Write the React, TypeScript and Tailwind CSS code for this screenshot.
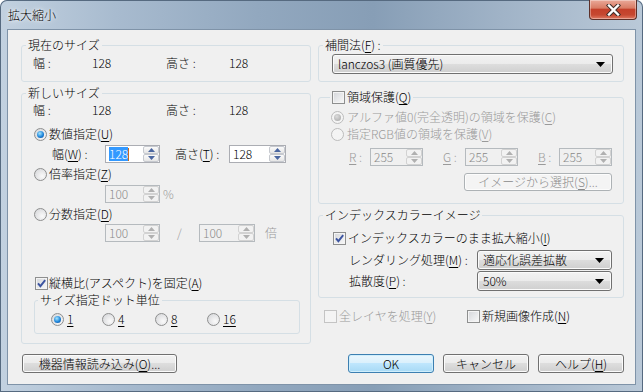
import React from "react";

const U = ({ c }: { c: string }) => <span className="underline underline-offset-[2px] decoration-[1px]">{c}</span>;

function Check({ checked, disabled }: { checked?: boolean; disabled?: boolean }) {
  return (
    <span
      className={`inline-flex w-[13px] h-[13px] shrink-0 items-center justify-center border ${
        disabled
          ? "border-[#c4c4c4] bg-[#f4f4f4]"
          : "border-[#8e8f8f] bg-[linear-gradient(135deg,#d4d6da,#f9f9f9)] shadow-[inset_0_0_0_1px_#f4f4f4]"
      }`}
    >
      {checked && (
        <svg width="11" height="11" viewBox="0 0 11 11">
          <path d="M2 5.3 L4.4 8.2 L9.2 2.2" fill="none" stroke="#3c54a0" strokeWidth="1.9" />
        </svg>
      )}
    </span>
  );
}

function Radio({ checked, disabled }: { checked?: boolean; disabled?: boolean }) {
  return (
    <span
      className={`inline-flex w-[13px] h-[13px] shrink-0 rounded-full border items-center justify-center ${
        disabled
          ? "border-[#bcbcbc] bg-[#f4f4f4]"
          : "border-[#8e8f8f] bg-[radial-gradient(circle_at_65%_65%,#fafafa,#d2d3d6)]"
      }`}
    >
      {checked && (
        <span
          className={`w-[7px] h-[7px] rounded-full ${
            disabled
              ? "bg-[radial-gradient(circle_at_40%_35%,#dcdcdc,#a4a4a4)]"
              : "bg-[radial-gradient(circle_at_40%_35%,#a6e6ff,#1f86da_55%,#0b3f8e)]"
          }`}
        />
      )}
    </span>
  );
}

function SpinBox({ value, w, disabled, selected }: { value: string; w: string; disabled?: boolean; selected?: boolean }) {
  const arrow = disabled ? "#b0b0b0" : "#4a66a0";
  return (
    <div
      className={`flex h-[18px] shrink-0 border ${
        disabled ? "border-[#b5babe] bg-[#f0f0f0] text-[#8a8a8a]" : "border-[#abadb3] bg-white text-black"
      } ${w}`}
    >
      <div className="flex-1 flex items-center pl-[3px]">
        {selected ? (
          <>
            <span className="bg-[#3399ff] text-white leading-[14px]">{value}</span>
            <span className="w-[1px] h-[13px] bg-[#c86a1e]" />
          </>
        ) : (
          value
        )}
      </div>
      <div className="w-[16px] flex flex-col">
        <div
          className={`h-[8px] flex items-center justify-center border rounded-[2px] ${
            disabled ? "border-[#d2d2d2] bg-[#f2f2f2]" : "border-[#c6c9cf] bg-[linear-gradient(#fbfbfb,#e6e6e6)]"
          }`}
        >
          <svg width="7" height="4" viewBox="0 0 7 4">
            <path d="M0 4 L3.5 0 L7 4Z" fill={arrow} />
          </svg>
        </div>
        <div
          className={`h-[8px] flex items-center justify-center border rounded-[2px] ${
            disabled ? "border-[#d2d2d2] bg-[#f2f2f2]" : "border-[#c6c9cf] bg-[linear-gradient(#fbfbfb,#e6e6e6)]"
          }`}
        >
          <svg width="7" height="4" viewBox="0 0 7 4">
            <path d="M0 0 L7 0 L3.5 4Z" fill={arrow} />
          </svg>
        </div>
      </div>
    </div>
  );
}

function Combo({ text, cls }: { text: string; cls: string }) {
  return (
    <div
      className={`flex items-center h-[20px] rounded-[3px] border border-[#707070] bg-[linear-gradient(#f2f2f2_0%,#ebebeb_50%,#dddddd_50%,#cfcfcf_100%)] shadow-[inset_0_0_0_1px_#fbfbfb] pl-[5px] pr-[7px] ${cls}`}
    >
      <span className="flex-1 whitespace-nowrap">{text}</span>
      <svg width="9" height="5" viewBox="0 0 9 5">
        <path d="M0 0 L9 0 L4.5 5Z" fill="#000" />
      </svg>
    </div>
  );
}

function Btn({ children, cls, disabled, def }: { children: React.ReactNode; cls: string; disabled?: boolean; def?: boolean }) {
  const look = def
    ? "border-[#3c7fb1] bg-[linear-gradient(#eaf6fd_0%,#d9f0fc_50%,#bee6fd_50%,#a7d9f5_100%)] shadow-[inset_0_0_0_1px_#cfeefc]"
    : disabled
    ? "border-[#adb2b5] bg-[#f4f4f4] text-[#8a8a8a] shadow-[inset_0_0_0_1px_#fcfcfc]"
    : "border-[#707070] bg-[linear-gradient(#f2f2f2_0%,#ebebeb_50%,#dddddd_50%,#cfcfcf_100%)] shadow-[inset_0_0_0_1px_#fbfbfb]";
  return (
    <div className={`flex items-center justify-center rounded-[3px] border whitespace-nowrap ${look} ${cls}`}>{children}</div>
  );
}

function SizeRow({ cls }: { cls: string }) {
  return (
    <div className={`flex h-[14px] items-center pl-[11px] ${cls}`}>
      <span className="w-[59px]">幅 :</span>
      <span className="w-[74px]">128</span>
      <span className="w-[63px]">高さ :</span>
      <span>128</span>
    </div>
  );
}

const fs = "border border-[#d5dfe5] rounded-[3px] min-w-0";
const lg = "ml-[4px] px-[2px] leading-[14px]";
const dis = "text-[#9a9a9a]";

export default function App() {
  return (
    <div className="w-[643px] h-[392px] flex flex-col rounded-t-[7px] overflow-hidden bg-[linear-gradient(90deg,#c2d1e0_0%,#a8bbcf_18%,#92a8bf_40%,#879eb6_58%,#a0b3c7_78%,#bac9d8_100%)] shadow-[inset_0_0_0_1px_#566a80] text-[12px] leading-[14px] font-light text-black font-['Noto_Sans_CJK_JP',sans-serif]">
      {/* title bar */}
      <div className="flex h-[29px] shrink-0 items-start">
        <span className="ml-[8px] mt-[8px] [text-shadow:0_0_6px_#fff,0_0_3px_#fff]">拡大縮小</span>
        <div className="ml-auto mr-[6px] w-[48px] h-[20px] rounded-b-[4px] border border-t-0 border-[#5d3029] bg-[linear-gradient(#eaa999_0%,#d97c65_42%,#c4402a_50%,#c64831_78%,#df7a63_100%)] shadow-[inset_0_0_0_1px_rgba(255,255,255,0.35)] flex items-center justify-center">
          <svg width="15" height="12" viewBox="0 0 15 12">
            <path d="M3 1.5 L12 10.5 M12 1.5 L3 10.5" stroke="#40302c" strokeWidth="4.4" strokeLinecap="square" />
            <path d="M3 1.5 L12 10.5 M12 1.5 L3 10.5" stroke="#fff" strokeWidth="2.4" strokeLinecap="square" />
          </svg>
        </div>
      </div>

      {/* client */}
      <div className="mx-[7px] mb-[7px] flex-1 border border-[#7f93a8] bg-[#f0f0f0] flex items-start gap-[7px] pl-[13px] pr-[11px] pt-[8px]">
        {/* left column */}
        <div className="w-[290px] flex flex-col">
          <fieldset className={`h-[44px] ${fs}`}>
            <legend className={lg}>現在のサイズ</legend>
            <SizeRow cls="mt-[4px]" />
          </fieldset>

          <fieldset className={`mt-[4px] h-[258px] ${fs}`}>
            <legend className={lg}>新しいサイズ</legend>
            <SizeRow cls="mt-[3px]" />
            <div className="mt-[10px] flex items-center h-[14px] pl-[12px]">
              <Radio checked />
              <span className="ml-[2px]">
                数値指定(<U c="U" />)
              </span>
            </div>
            <div className="mt-[4px] flex items-center h-[18px] pl-[30px]">
              <span className="w-[53px] shrink-0">
                幅(<U c="W" />) :
              </span>
              <SpinBox w="w-[55px]" value="128" selected />
              <span className="ml-[15px] w-[54px] shrink-0">
                高さ(<U c="T" />) :
              </span>
              <SpinBox w="w-[57px]" value="128" />
            </div>
            <div className="mt-[4px] flex items-center h-[14px] pl-[12px]">
              <Radio />
              <span className="ml-[2px]">
                倍率指定(<U c="Z" />)
              </span>
            </div>
            <div className="mt-[4px] flex items-center h-[18px] pl-[83px]">
              <SpinBox w="w-[55px]" value="100" disabled />
              <span className={`ml-[3px] ${dis}`}>%</span>
            </div>
            <div className="mt-[4px] flex items-center h-[14px] pl-[12px]">
              <Radio />
              <span className="ml-[2px]">
                分数指定(<U c="D" />)
              </span>
            </div>
            <div className="mt-[3px] flex items-center h-[18px] pl-[83px]">
              <SpinBox w="w-[55px]" value="100" disabled />
              <span className={`w-[39px] shrink-0 pl-[17px] ${dis}`}>/</span>
              <SpinBox w="w-[56px]" value="100" disabled />
              <span className={`ml-[10px] ${dis}`}>倍</span>
            </div>
            <div className="mt-[34px] flex items-center h-[14px] pl-[13px]">
              <Check checked />
              <span className="ml-[1px]">
                縦横比(アスペクト)を固定(<U c="A" />)
              </span>
            </div>
            <fieldset className={`mt-[3px] ml-[12px] w-[266px] h-[41px] ${fs}`}>
              <legend className="ml-[3px] px-[2px] leading-[14px]">サイズ指定ドット単位</legend>
              <div className="mt-[5px] flex items-center h-[14px] pl-[16px]">
                <div className="w-[51px] flex items-center">
                  <Radio checked />
                  <span className="ml-[3px]">
                    <U c="1" />
                  </span>
                </div>
                <div className="w-[53px] flex items-center">
                  <Radio />
                  <span className="ml-[3px]">
                    <U c="4" />
                  </span>
                </div>
                <div className="w-[52px] flex items-center">
                  <Radio />
                  <span className="ml-[3px]">
                    <U c="8" />
                  </span>
                </div>
                <div className="flex items-center">
                  <Radio />
                  <span className="ml-[3px]">
                    <U c="16" />
                  </span>
                </div>
              </div>
            </fieldset>
          </fieldset>

          <Btn cls="mt-[10px] ml-[1px] w-[155px] h-[19px]">
            機器情報読み込み(<U c="O" />)...
          </Btn>
        </div>

        {/* right column */}
        <div className="w-[306px] flex flex-col">
          <fieldset className={`h-[44px] ${fs}`}>
            <legend className={lg}>
              補間法(<U c="F" />) :
            </legend>
            <Combo cls="mt-[2px] ml-[13px] w-[281px]" text="lanczos3 (画質優先)" />
          </fieldset>

          <fieldset className={`mt-[8px] h-[114px] ${fs}`}>
            <legend className="ml-[11px] px-[2px] leading-[14px]">
              <span className="flex items-center h-[14px]">
                <Check />
                <span className="ml-[2px]">
                  領域保護(<U c="Q" />)
                </span>
              </span>
            </legend>
            <div className={`mt-[6px] flex items-center h-[14px] pl-[12px] ${dis}`}>
              <Radio checked disabled />
              <span className="ml-[3px]">
                アルファ値0(完全透明)の領域を保護(<U c="C" />)
              </span>
            </div>
            <div className={`mt-[3px] flex items-center h-[14px] pl-[12px] ${dis}`}>
              <Radio disabled />
              <span className="ml-[3px]">
                指定RGB値の領域を保護(<U c="V" />)
              </span>
            </div>
            <div className={`mt-[7px] flex items-center h-[18px] pl-[30px] ${dis}`}>
              <span className="w-[21px] shrink-0">
                <U c="R" /> :
              </span>
              <SpinBox w="w-[53px]" value="255" disabled />
              <span className="ml-[20px] w-[22px] shrink-0">
                <U c="G" /> :
              </span>
              <SpinBox w="w-[53px]" value="255" disabled />
              <span className="ml-[20px] w-[21px] shrink-0">
                <U c="B" /> :
              </span>
              <SpinBox w="w-[53px]" value="255" disabled />
            </div>
            <Btn disabled cls="mt-[7px] ml-[145px] w-[148px] h-[18px]">
              イメージから選択(<U c="S" />)...
            </Btn>
          </fieldset>

          <fieldset className={`mt-[4px] h-[90px] ${fs}`}>
            <legend className={lg}>インデックスカラーイメージ</legend>
            <div className="mt-[9px] flex items-center h-[14px] pl-[14px]">
              <Check checked />
              <span className="ml-[2px]">
                インデックスカラーのまま拡大縮小(<U c="I" />)
              </span>
            </div>
            <div className="mt-[5px] flex items-center h-[20px] pl-[30px]">
              <span className="w-[128px] shrink-0">
                レンダリング処理(<U c="M" />) :
              </span>
              <Combo cls="w-[135px]" text="適応化誤差拡散" />
            </div>
            <div className="mt-[1px] flex items-center h-[20px] pl-[30px]">
              <span className="w-[128px] shrink-0">
                拡散度(<U c="P" />) :
              </span>
              <Combo cls="w-[135px]" text="50%" />
            </div>
          </fieldset>

          <div className="mt-[11px] flex items-center h-[14px] pl-[6px]">
            <div className={`w-[143px] flex items-center ${dis}`}>
              <Check disabled />
              <span className="ml-[2px]">
                全レイヤを処理(<U c="Y" />)
              </span>
            </div>
            <Check />
            <span className="ml-[2px]">
              新規画像作成(<U c="N" />)
            </span>
          </div>

          <div className="mt-[31px] flex justify-end gap-[9px]">
            <Btn def cls="w-[86px] h-[19px]">
              OK
            </Btn>
            <Btn cls="w-[86px] h-[19px]">キャンセル</Btn>
            <Btn cls="w-[86px] h-[19px]">
              ヘルプ(<U c="H" />)
            </Btn>
          </div>
        </div>
      </div>
    </div>
  );
}
